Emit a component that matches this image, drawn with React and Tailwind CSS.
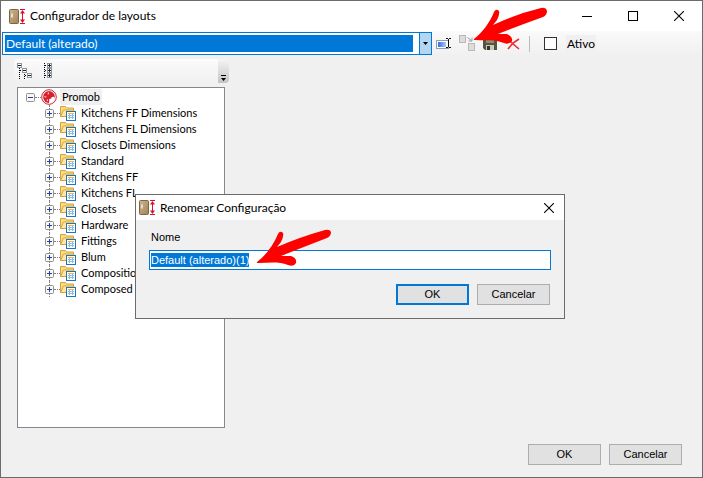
import { useState } from 'react'

const groups = [
  'Kitchens FF Dimensions',
  'Kitchens FL Dimensions',
  'Closets Dimensions',
  'Standard',
  'Kitchens FF',
  'Kitchens FL',
  'Closets',
  'Hardware',
  'Fittings',
  'Blum',
  'Compositions',
  'Composed Items',
]

function AppIcon() {
  return (
    <svg width="17" height="17" viewBox="0 0 17 17" className="shrink-0" aria-hidden="true">
      <defs>
        <linearGradient id="door" x1="0" x2="1" y1="0" y2="1">
          <stop offset="0" stopColor="#cdb692" />
          <stop offset="1" stopColor="#a08258" />
        </linearGradient>
      </defs>
      <rect x="0.5" y="1.5" width="9" height="14" rx="1" fill="url(#door)" stroke="#80643f" />
      <path d="M3 5.500v4" stroke="#f5f0e6" strokeWidth="1.5" />
      <path d="M11 1.500h5M11 15.500h5M13.500 3v11" stroke="#d3122e" fill="none" />
      <path d="M13.500 2l2.500 3.500h-5zM13.500 15l2.500-3.500h-5z" fill="#d3122e" />
    </svg>
  )
}

function CloseIcon() {
  return (
    <svg width="10" height="10" viewBox="0 0 10 10" aria-hidden="true">
      <path d="M0 0l10 10M10 0L0 10" stroke="#000" strokeWidth="1.1" />
    </svg>
  )
}

function RenameIcon() {
  return (
    <svg width="16" height="16" viewBox="0 0 16 16" aria-hidden="true">
      <defs>
        <linearGradient id="field" x1="0" x2="1" y1="0" y2="0">
          <stop offset="0" stopColor="#2f6fe0" />
          <stop offset="1" stopColor="#a9c8fa" />
        </linearGradient>
      </defs>
      <rect x="0.5" y="4.500" width="12" height="8" fill="#fff" stroke="#8f9db5" />
      <rect x="2" y="6" width="8" height="5" fill="url(#field)" />
      <path d="M10 2.500h2M13 2.500h2M10 11.500h2M13 11.500h2M12.500 3v8" stroke="#111" fill="none" />
    </svg>
  )
}

function DuplicateIcon() {
  return (
    <svg width="17" height="17" viewBox="0 0 17 17" aria-hidden="true">
      <rect x="0.5" y="0.500" width="6" height="7" fill="#dcdcdc" stroke="#b9b9b9" />
      <rect x="9.500" y="8.500" width="6" height="7" fill="#dcdcdc" stroke="#b9b9b9" />
      <path d="M8.500 2.500l4 3M13 2.500v3.500H9.500" stroke="#9a9a9a" fill="none" />
    </svg>
  )
}

function SaveIcon() {
  return (
    <svg width="14" height="14" viewBox="0 0 14 14" aria-hidden="true">
      <path d="M0 1h14v12H2l-2-2z" fill="#55543f" />
      <rect x="3" y="1" width="8" height="5" fill="#8f8c74" />
      <rect x="3" y="8" width="8" height="5" fill="#c9c9bd" />
      <rect x="4" y="9" width="3" height="4" fill="#33332f" />
    </svg>
  )
}

function DeleteIcon() {
  return (
    <svg width="13" height="12" viewBox="0 0 13 12" aria-hidden="true">
      <path d="M1 1l4 4 7 6M12 1L6 5l-5 6" stroke="#f0292c" strokeWidth="1.600" fill="none" />
    </svg>
  )
}

function Box({ x, y, plus }) {
  return (
    <g>
      <rect x={x + 0.5} y={y + 0.5} width="4" height="4" fill="#fff" stroke="#8b95a0" />
      <path d={`M${x + 1} ${y + 2.5}h3`} stroke="#222" />
      {plus && <path d={`M${x + 2.5} ${y + 1}v3`} stroke="#222" />}
    </g>
  )
}

function CollapseIcon() {
  return (
    <svg width="16" height="16" viewBox="0 0 16 16" aria-hidden="true">
      <path d="M2.500 5v11M3 7.500h2M7.500 11v5M8 12.500h2" stroke="#000" strokeDasharray="1 1" fill="none" />
      <Box x={0} y={0} />
      <Box x={5} y={5} />
      <Box x={10} y={10} />
    </svg>
  )
}

function ExpandIcon() {
  return (
    <svg width="9" height="16" viewBox="0 0 9 16" aria-hidden="true">
      <path d="M0.500 0v16M1 2.500h3M1 7.500h3M1 12.500h3" stroke="#000" strokeDasharray="1 1" fill="none" />
      <Box x={3} y={0} plus />
      <Box x={3} y={5} plus />
      <Box x={3} y={10} plus />
    </svg>
  )
}

function FolderIcon() {
  return (
    <svg width="16" height="16" viewBox="0 0 16 16" className="shrink-0" aria-hidden="true">
      <path d="M0.500 11.500V1.500h5l1 1.500h7v3" fill="#fbdc82" stroke="#d9a03a" />
      <path d="M0.500 11.500l3-6.500h10.500l-1 6.500z" fill="#fde9a6" stroke="#d9a03a" />
      <rect x="6.500" y="6.500" width="9" height="9" fill="#fff" stroke="#1a78b4" />
      <rect x="8" y="8" width="6" height="1" fill="#f3b052" />
      <path d="M8 10.500h6M8 12.500h6M9.500 9v5M12.500 9v5" stroke="#8dbbe2" />
    </svg>
  )
}

function PromobIcon() {
  return (
    <svg width="16" height="16" viewBox="0 0 16 16" className="shrink-0" aria-hidden="true">
      <circle cx="8" cy="8" r="7.300" fill="#fff" stroke="#d5222c" />
      <circle cx="8" cy="8" r="5.900" fill="#d5222c" />
      <path d="M8 14.500l.3-4.500 2-.5.5-1.500 2.200-.2 1 1.200c-.5 3-2.500 5-6 5.500zM7 2.500l1 2.500-1.300.5zM2.500 7l3 .8-.5 1zM5.500 11.500l1.300-1.500.2 2z" fill="#fff" />
    </svg>
  )
}

function Toggle({ open }) {
  return (
    <svg width="9" height="9" viewBox="0 0 9 9" aria-hidden="true">
      <rect x="0.500" y="0.500" width="8" height="8" rx="1" fill="#f7f7f7" stroke="#919191" />
      <path d="M2 4.500h5" stroke="#2b3f8f" />
      {!open && <path d="M4.500 2v5" stroke="#2b3f8f" />}
    </svg>
  )
}

function Arrow({ className, d, viewBox }) {
  return (
    <svg viewBox={viewBox} className={className} aria-hidden="true">
      <path d={d} fill="#fe0000" />
    </svg>
  )
}

function Button({ children, primary }) {
  return (
    <button
      type="button"
      className={`flex h-[21px] w-[73px] items-center justify-center bg-[#e1e1e1] ${
        primary ? 'border-2 border-[#0078d7]' : 'border border-[#adadad]'
      }`}
    >
      {children}
    </button>
  )
}

function Tree() {
  return (
    <ul className="h-[341px] overflow-hidden border border-[#828790] bg-white pt-px pl-2 font-['Lato',sans-serif]">
      <li>
        <div className="flex h-4 items-center">
          <button type="button" aria-label="Recolher Promob"><Toggle open /></button>
          <span className="w-[6px] border-t border-dotted border-[#808080]" />
          <PromobIcon />
          <span className="ml-[3px] bg-[#f0f0f0] px-[2px] leading-4">Promob</span>
        </div>
        <ul className="ml-[19px]">
          {groups.map((name) => (
            <li key={name} className="flex h-4 items-center">
              <button type="button" aria-label={`Expandir ${name}`} className="flex h-4 flex-col items-center">
                <span className="h-1 border-l border-dotted border-[#808080]" />
                <Toggle />
                <span className="h-[3px] border-l border-dotted border-[#808080]" />
              </button>
              <span className="w-[6px] border-t border-dotted border-[#808080]" />
              <FolderIcon />
              <span className="pl-[5px] whitespace-nowrap">{name}</span>
            </li>
          ))}
        </ul>
      </li>
    </ul>
  )
}

function RenameDialog() {
  const [name, setName] = useState('Default (alterado)(1)')

  return (
    <div
      role="dialog"
      aria-label="Renomear Configuração"
      className="absolute top-[193px] left-[134px] w-[430px] border border-[#6b6b6b] bg-[#f0f0f0]"
    >
      <header className="flex h-[25px] items-center bg-white pl-[3px] font-['Lato',sans-serif] text-[12px]">
        <AppIcon />
        <h2 className="grow pl-1">Renomear Configuração</h2>
        <button type="button" aria-label="Fechar" className="mr-[10px]"><CloseIcon /></button>
      </header>
      <form className="px-[13px] pt-[9px] pb-[13px]">
        <label htmlFor="config-name" className="block pl-[2px] leading-4">Nome</label>
        <div className="mt-[5px] h-5 border border-[#0078d7] bg-white">
          <input
            id="config-name"
            value={name}
            onChange={(e) => setName(e.target.value)}
            className="mt-[2px] ml-px block field-sizing-content h-[14px] bg-[#0078d7] text-white outline-none"
          />
        </div>
        <div className="mt-[14px] flex justify-end gap-2 pr-px">
          <Button primary>OK</Button>
          <Button>Cancelar</Button>
        </div>
      </form>
      <Arrow
        viewBox="250 222 90 50"
        className="absolute top-[27px] left-[114px] h-[50px] w-[90px]"
        d="M257 262C266 255 273 246 278 234Q280 230 283 233Q284 236 281 242L277 247Q300 237 325 230Q330 229 331 232Q331 236 327 238Q301 248 281 256L291 256Q297 258 296 263Q294 267 288 265C278 261 268 263 259 263Q256 263 257 262Z"
      />
    </div>
  )
}

export default function App() {
  const [active, setActive] = useState(false)

  return (
    <div className="relative flex min-h-screen flex-col border border-[#6b6b6b] bg-[#f0f0f0] font-['Liberation_Sans',sans-serif] text-[11px] text-black">
      <header className="flex h-[30px] items-center bg-white pl-2 font-['Lato',sans-serif] text-[12px]">
        <AppIcon />
        <h1 className="grow pl-1">Configurador de layouts</h1>
        <div className="flex items-center gap-9 pr-[18px]">
          <button type="button" aria-label="Minimizar" className="h-px w-[10px] bg-black" />
          <button type="button" aria-label="Maximizar" className="size-[10px] border border-black" />
          <button type="button" aria-label="Fechar"><CloseIcon /></button>
        </div>
      </header>

      <div className="flex h-[25px] items-center bg-gradient-to-b from-[#fafafa] to-[#f0f0f0] pl-px font-['Lato',sans-serif] text-[12px]">
        <div className="flex h-[23px] w-[430px] border border-[#0078d7] bg-white">
          <select
            aria-label="Layout"
            className="m-[2px] grow appearance-none bg-[#0078d7] pl-px leading-[17px] text-white outline-none"
          >
            <option>Default (alterado)</option>
          </select>
          <span className="ml-1 flex w-3 items-center justify-center border-l border-[#0078d7] bg-[#b3d7f3]">
            <svg width="5" height="3" viewBox="0 0 5 3" aria-hidden="true"><path d="M0 0h5L2.500 3z" /></svg>
          </span>
        </div>
        <div className="flex items-center pl-1">
          <button type="button" aria-label="Renomear" className="mr-[7px]"><RenameIcon /></button>
          <button type="button" aria-label="Duplicar" className="mr-[7px]"><DuplicateIcon /></button>
          <button type="button" aria-label="Salvar" className="mr-[10px]"><SaveIcon /></button>
          <button type="button" aria-label="Excluir"><DeleteIcon /></button>
        </div>
        <span className="mx-[9px] h-4 w-px bg-[#bdbdbd]" />
        <label className="ml-[5px] flex items-center gap-[9px]">
          <input
            type="checkbox"
            checked={active}
            onChange={(e) => setActive(e.target.checked)}
            className="size-[13px] appearance-none border border-[#333] bg-white checked:bg-[#0078d7]"
          />
          <span className="bg-[#f0f0f0] px-px">Ativo</span>
        </label>
      </div>

      <main className="w-[228px] pt-[3px] pl-[13px]">
        <div className="flex h-6 items-center rounded bg-gradient-to-b from-[#fbfbfb] to-[#f0f0f0] pl-[3px]">
          <button type="button" aria-label="Recolher tudo"><CollapseIcon /></button>
          <button type="button" aria-label="Expandir tudo" className="ml-[11px]"><ExpandIcon /></button>
          <button type="button" aria-label="Mais opções" className="ml-auto flex h-6 w-[11px] items-end justify-center rounded-r bg-gradient-to-b from-[#f5f5f5] to-[#c4c4c4] pb-px">
            <svg width="7" height="7" viewBox="0 0 7 7" aria-hidden="true"><path d="M1 0h5v1H1zM1 3h5L3.500 6z" /></svg>
          </button>
        </div>
        <div className="mt-1 mr-1 ml-[3px]">
          <Tree />
        </div>
      </main>

      <footer className="mt-auto flex justify-end gap-2 pr-5 pb-3">
        <Button>OK</Button>
        <Button>Cancelar</Button>
      </footer>

      <RenameDialog />

      <Arrow
        viewBox="465 2 90 50"
        className="absolute top-px left-[464px] h-[50px] w-[90px]"
        d="M474 39C483 32 490 22 494 12Q496 8 499 11Q500 14 497 20L493 25Q516 14 541 8Q546 7 547 11Q547 15 543 17Q518 26 498 34L507 34Q513 37 512 41Q509 45 504 43C494 39 484 41 476 40Q473 40 474 39Z"
      />
    </div>
  )
}
